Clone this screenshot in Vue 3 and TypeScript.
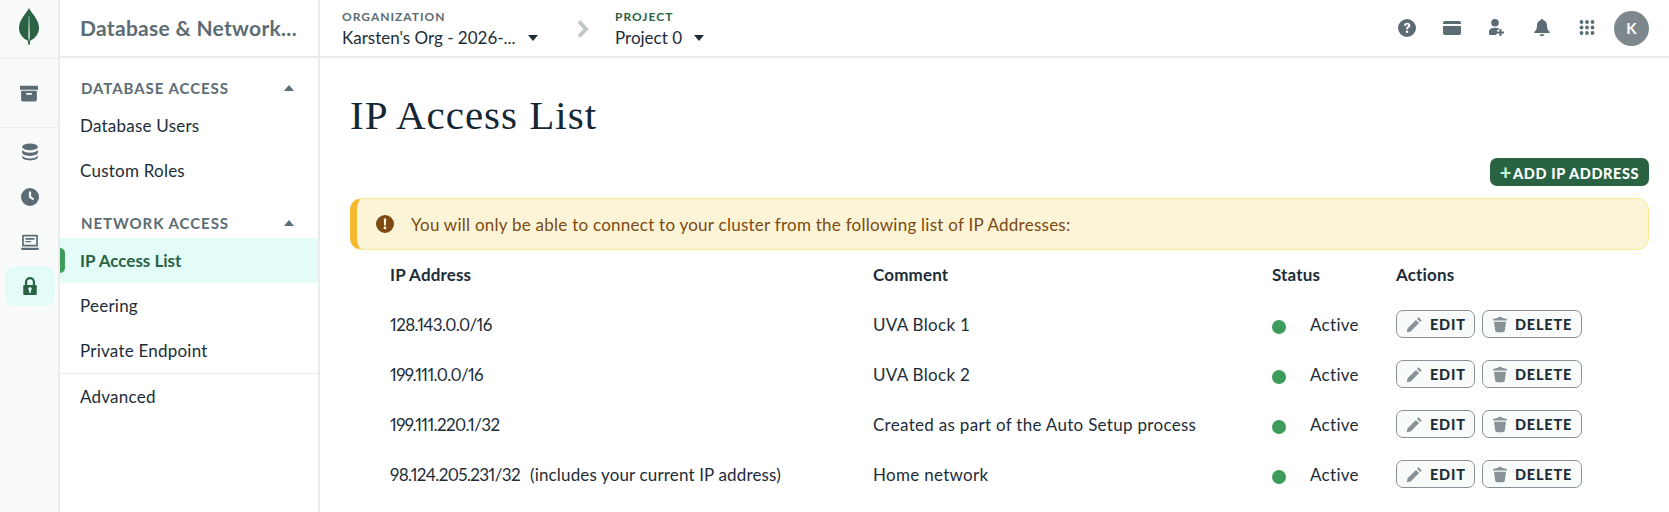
<script setup lang="ts">
interface Row { ip: string; note?: string; comment: string }
const rows: Row[] = [
  { ip: '128.143.0.0/16', comment: 'UVA Block 1' },
  { ip: '199.111.0.0/16', comment: 'UVA Block 2' },
  { ip: '199.111.220.1/32', comment: 'Created as part of the Auto Setup process' },
  { ip: '98.124.205.231/32', note: '(includes your current IP address)', comment: 'Home network' },
]
</script>

<template>
  <div class="page">
    <aside class="rail">
      <div class="logo">
        <svg width="20" height="38" viewBox="0 0 20 38">
          <path fill="#2a6344" d="M10 0c1.200 3 3.400 5 5.600 8.200C18.700 12.600 20 16 20 20c0 6-4 10.500-8.800 12.800L10.600 37h-1.200l-.6-4.200C4 30.500 0 26 0 20c0-4 1.300-7.400 4.400-11.800C6.600 5 8.800 3 10 0z"/>
          <path fill="#cfe3d8" d="M9.700 8h.6l.5 20-.5 5h-.6l-.5-5z"/>
        </svg>
      </div>
      <div class="rail-top">
        <svg class="ri" viewBox="0 0 16 16"><path d="M0 1.500h16V5H0zM1 6h14v8a1.500 1.500 0 0 1-1.500 1.500h-11A1.500 1.500 0 0 1 1 14zm4.500 2v1.500h5V8z" fill-rule="evenodd"/></svg>
      </div>
      <div class="rail-links">
        <div class="ri-box">
          <svg class="ri" viewBox="0 0 16 16"><ellipse cx="8" cy="3.500" rx="7" ry="3"/><path d="M1 6c1 1.800 3.700 2.700 7 2.700S14 7.800 15 6v2.500c0 1.700-3.100 3-7 3s-7-1.300-7-3z"/><path d="M1 11c1 1.800 3.700 2.700 7 2.700s6-.9 7-2.700v1.500c0 1.700-3.100 3-7 3s-7-1.300-7-3z"/></svg>
        </div>
        <div class="ri-box">
          <svg class="ri" viewBox="0 0 16 16"><path fill-rule="evenodd" d="M8 0a8 8 0 1 1 0 16A8 8 0 0 1 8 0zM7 3v5.500l3.700 2.300 1-1.500L9 7.600V3z"/></svg>
        </div>
        <div class="ri-box">
          <svg class="ri" viewBox="0 0 16 16"><path fill-rule="evenodd" d="M2 1.500h12a1 1 0 0 1 1 1V12H1V2.500a1 1 0 0 1 1-1zm.5 1.500v7.500h11V3zM4 4.500h8V6H4zm0 2.500h5v1.300H4zM0 13h16v.500c0 .8-.7 1.500-1.500 1.500h-13C.7 15 0 14.300 0 13.500z"/></svg>
        </div>
        <div class="ri-box active">
          <svg class="ri" viewBox="0 0 16 16"><path fill-rule="evenodd" d="M8 0a4.500 4.500 0 0 1 4.500 4.500V7h.5a1 1 0 0 1 1 1v7a1 1 0 0 1-1 1H3a1 1 0 0 1-1-1V8a1 1 0 0 1 1-1h.5V4.500A4.500 4.500 0 0 1 8 0zm0 2a2.500 2.500 0 0 0-2.500 2.500V7h5V4.500A2.500 2.500 0 0 0 8 2zm0 7.200a1.500 1.500 0 0 0-.8 2.800V14h1.600v-2a1.500 1.500 0 0 0-.8-2.800z"/></svg>
        </div>
      </div>
    </aside>

    <aside class="side">
      <div class="side-title"><span>Database &amp; Network...</span></div>
      <div class="side-body">
        <div class="sec first"><span>DATABASE ACCESS</span><i class="up"></i></div>
        <div class="item">Database Users</div>
        <div class="item">Custom Roles</div>
        <div class="sec second"><span>NETWORK ACCESS</span><i class="up"></i></div>
        <div class="item current">IP Access List</div>
        <div class="item">Peering</div>
        <div class="item">Private Endpoint</div>
        <div class="item adv">Advanced</div>
      </div>
    </aside>

    <div class="right">
      <header class="top">
        <div class="crumb org">
          <div class="lab">ORGANIZATION</div>
          <div class="val">Karsten's Org - 2026-... <i class="down"></i></div>
        </div>
        <svg class="chev" width="14" height="20" viewBox="0 0 14 20"><path d="M3 2.500l7 7.500-7 7.500" fill="none" stroke="#c1c7c6" stroke-width="4"/></svg>
        <div class="crumb">
          <div class="lab green">PROJECT</div>
          <div class="val">Project 0 <i class="down"></i></div>
        </div>
        <div class="tools">
          <svg class="ti" viewBox="0 0 18 18"><path fill-rule="evenodd" d="M9 0a9 9 0 1 1 0 18A9 9 0 0 1 9 0zM6 6.800h2.100c.1-.8.400-1.200 1-1.200.6 0 1 .4 1 .9 0 .6-.4.900-1 1.300-.8.600-1.200 1.200-1.100 2.500h2c0-.7.200-1 .9-1.500.9-.6 1.400-1.300 1.400-2.400 0-1.700-1.400-2.700-3.200-2.700C7.200 3.700 6 4.900 6 6.800zM9 11.500a1.300 1.300 0 1 0 0 2.600 1.300 1.300 0 0 0 0-2.600z"/></svg>
          <svg class="ti" viewBox="0 0 18 18"><path d="M2 2h14a2 2 0 0 1 2 2v1H0V4a2 2 0 0 1 2-2zM0 7h18v7a2 2 0 0 1-2 2H2a2 2 0 0 1-2-2z"/></svg>
          <svg class="ti" viewBox="0 0 18 18"><circle cx="7" cy="3.800" r="3.800"/><path d="M1 16v-3.500C1 10 3 8.700 7 8.700c1.500 0 2.800.2 3.800.6v1.700H9v4h-.8v1H2a1 1 0 0 1-1-1z"/><path d="M11.500 10h2v2.500H16v2h-2.500V17h-2v-2.500H9v-2h2.500z"/></svg>
          <svg class="ti" viewBox="0 0 18 18"><path d="M9 0c.8 0 1.400.6 1.400 1.300 2.400.6 3.600 2.600 3.600 5.200 0 3.500 1 5 2.600 6.300.5.400.3 1.200-.4 1.200H1.800c-.7 0-.9-.8-.4-1.200C3 11.500 4 10 4 6.500c0-2.600 1.200-4.600 3.600-5.200C7.600.6 8.200 0 9 0zM6.500 15.300h5C11.200 16.500 10.200 17.300 9 17.300s-2.200-.8-2.500-2z"/></svg>
          <svg class="ti" viewBox="0 0 18 18"><g><circle cx="3.500" cy="3" r="1.900"/><circle cx="9" cy="3" r="1.900"/><circle cx="14.500" cy="3" r="1.900"/><circle cx="3.500" cy="8.500" r="1.900"/><circle cx="9" cy="8.500" r="1.900"/><circle cx="14.500" cy="8.500" r="1.900"/><circle cx="3.500" cy="14" r="1.900"/><circle cx="9" cy="14" r="1.900"/><circle cx="14.500" cy="14" r="1.900"/></g></svg>
          <div class="avatar">K</div>
        </div>
      </header>

      <main class="main">
        <h1>IP Access List</h1>
        <div class="bar"><button class="add"><span class="plus">+</span>ADD IP ADDRESS</button></div>
        <div class="banner">
          <svg width="18" height="18" viewBox="0 0 18 18"><path fill="#7c4a12" fill-rule="evenodd" d="M9 0a9 9 0 1 1 0 18A9 9 0 0 1 9 0zM7.800 3.500l.3 7h1.800l.3-7zM9 11.500a1.400 1.400 0 1 0 0 2.800 1.400 1.400 0 0 0 0-2.800z"/></svg>
          <span>You will only be able to connect to your cluster from the following list of IP Addresses:</span>
        </div>
        <div class="table">
          <div class="tr head">
            <div>IP Address</div><div>Comment</div><div>Status</div><div>Actions</div>
          </div>
          <div v-for="r in rows" :key="r.ip" class="tr">
            <div><span class="ip">{{ r.ip }}</span><span v-if="r.note" class="note">{{ r.note }}</span></div>
            <div>{{ r.comment }}</div>
            <div class="status"><i class="dot"></i>Active</div>
            <div class="acts">
              <button class="act edit">
                <svg width="17" height="17" viewBox="0 0 16 16"><path fill="#889397" d="M11.800 1.200l3 3-1.500 1.500-3-3zM9.300 3.700l3 3-7.800 7.800-3.800.8.800-3.800z"/></svg>
                EDIT
              </button>
              <button class="act del">
                <svg width="16" height="17" viewBox="0 0 16 16"><path fill="#889397" d="M1 2.600C3 1.800 5 1.500 6 1.400 6.100.7 6.800.3 8 .3s1.900.4 2 1.100c1 .1 3 .4 5 1.200v1.500H1zM2 5.300h12l-1.200 8.800c-.2 1-1 1.600-2 1.600H5.200c-1 0-1.800-.6-2-1.600z"/></svg>
                DELETE
              </button>
            </div>
          </div>
        </div>
      </main>
    </div>
  </div>
</template>

<style>
html, body { margin: 0; background: #fff; }
</style>

<style scoped>
* { box-sizing: border-box; }
.page {
  width: 1669px; height: 512px; overflow: hidden; display: flex; background: #fff;
  font-family: Lato, "Noto Sans", sans-serif; font-size: 17px; color: #1c2d38;
}
.rail { width: 60px; flex: none; background: #f9fbfa; border-right: 2px solid #e8edeb; }
.logo { height: 58px; display: flex; justify-content: center; padding-top: 8px; }
.rail-top { height: 70px; display: flex; align-items: center; justify-content: center; border-bottom: 1px solid #e8edeb; border-top: 1px solid #e8edeb; }
.rail-links { padding: 1px 5px 0; display: flex; flex-direction: column; }
.ri { width: 18px; height: 18px; fill: #5c6c75; display: block; }
.ri-box { height: 45px; display: flex; align-items: center; justify-content: center; width: 50px; }
.ri-box.active { height: 40px; background: #e3fcf7; border-radius: 10px; margin-top: 2px; }
.ri-box.active .ri { fill: #2a6344; }

.side { width: 260px; flex: none; border-right: 2px solid #e8edeb; }
.side-title { height: 58px; border-bottom: 2px solid #e8edeb; display: flex; align-items: center; padding: 0 0 2px 20px; font-size: 21px; font-weight: 700; letter-spacing: .3px; color: #5c6c75; }
.side-body { display: flex; flex-direction: column; }
.sec { display: flex; justify-content: space-between; align-items: center; padding: 0 24px 0 21px; font-size: 15px; font-weight: 700; letter-spacing: .95px; color: #5c6c75; height: 20px; }
.sec.first { margin-top: 20px; }
.sec.second { margin-top: 20px; }
.up { width: 0; height: 0; border-left: 5.500px solid transparent; border-right: 5.500px solid transparent; border-bottom: 6px solid #5c6c75; }
.item { height: 45px; display: flex; align-items: center; padding-left: 20px; letter-spacing: .23px; color: #1c2d38; }
.sec + .item { margin-top: 5px; }
.current { background: #e3fcf7; color: #2a6344; font-weight: 700; position: relative; letter-spacing: 0; }
.current::before { content: ''; position: absolute; left: 0; top: 10px; bottom: 10px; width: 5px; background: #3d9c5a; border-radius: 0 5px 5px 0; }
.adv { border-top: 1px solid #e8edeb; height: 46px; }

.right { flex: 1; min-width: 0; }
.top { height: 58px; border-bottom: 2px solid #e8edeb; display: flex; align-items: center; padding: 2px 20px 0 22px; }
.crumb { display: flex; flex-direction: column; gap: 1px; }
.crumb.org { width: 234px; }
.lab { font-size: 12px; font-weight: 700; letter-spacing: 1px; color: #5c6c75; line-height: 16px; }
.lab.green { color: #2a6344; }
.val { line-height: 24px; display: flex; align-items: center; gap: 12px; white-space: nowrap; }
.down { width: 0; height: 0; border-left: 5.500px solid transparent; border-right: 5.500px solid transparent; border-top: 6px solid #1c2d38; }
.chev { margin-right: 25px; flex: none; }
.tools { margin-left: auto; display: flex; align-items: center; margin-top: -2px; }
.ti { width: 18px; height: 18px; fill: #5c6c75; margin-right: 27px; display: block; }
.avatar { width: 35px; height: 35px; border-radius: 50%; background: #7d888d; color: #fff; font-weight: 700; font-size: 15px; display: flex; align-items: center; justify-content: center; margin-left: -9px; }

.main { padding: 0 20px 0 30px; }
h1 { margin: 0; height: 100px; padding-top: 33px; font-family: "Liberation Serif", serif; font-weight: 400; font-size: 41px; line-height: 48px; color: #142733; letter-spacing: 1px; }
.bar { display: flex; justify-content: flex-end; height: 40px; }
.add { width: 159px; height: 28px; background: #2a6344; color: #fff; border: 0; border-radius: 7px; font: 900 14.500px Lato, sans-serif; letter-spacing: .6px; padding: 0; }
.plus { color: #c0f5d8; font-size: 20px; line-height: 1; margin-right: 1px; vertical-align: -1px; }
.banner { height: 52px; background: #fbf4d6; border: 1px solid #fbe896; border-left: 7px solid #f5b82e; border-radius: 12px; display: flex; align-items: center; gap: 17px; padding-left: 19px; color: #7c4a12; letter-spacing: .25px; }
.table { padding-left: 40px; margin-top: -1px; }
.tr { display: grid; grid-template-columns: 483px 399px 124px 1fr; align-items: center; height: 50px; letter-spacing: .3px; }
.head { font-weight: 700; letter-spacing: .15px; }
.ip { font-variant-numeric: proportional-nums; letter-spacing: -.6px; }
.note { margin-left: 10px; letter-spacing: .15px; }
.status { display: flex; align-items: center; }
.dot { width: 14px; height: 14px; border-radius: 50%; background: #3d9c5a; margin: 6px 24px 0 0; }
.acts { display: flex; gap: 7px; }
.act { height: 28px; border: 1px solid #889397; border-radius: 7px; background: #f9fbfa; display: flex; align-items: center; justify-content: flex-start; font: 900 14.500px Lato, sans-serif; letter-spacing: .8px; color: #1c2d38; padding: 0 0 0 9px; gap: 7px; }
.edit { width: 79px; }
.del { width: 100px; }
</style>
